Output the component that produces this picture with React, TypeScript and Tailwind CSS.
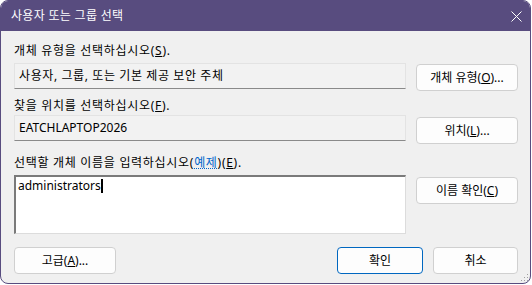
import React from 'react';

const font = { fontFamily: '"Noto Sans", "Noto Sans CJK KR", sans-serif' };

function Btn({ children, primary = false, className = '' }: { children: React.ReactNode; primary?: boolean; className?: string }) {
    return (
        <button
            type="button"
            className={`h-[27px] flex items-center justify-center rounded-[4px] bg-[#fdfdfd] text-[12px] text-black leading-none border ${primary ? 'border-[#0067c0]' : 'border-[#d0d0d0]'} ${className}`}
        >
            {children}
        </button>
    );
}

export default function App() {
    return (
        <div className="w-[532px] h-[285px] bg-white" style={font}>
            <div className="relative w-[531px] h-[284px] rounded-[8px] border border-[#584c7f] bg-[#f0f0f0] overflow-hidden flex flex-col">
                {/* title bar */}
                <div className="h-[30px] bg-[#584c7f] flex items-center justify-between pl-[10px] pr-[8px] text-white shrink-0">
                    <span className="text-[12px] leading-none tracking-[0.3px]">사용자 또는 그룹 선택</span>
                    <svg width="11" height="11" viewBox="0 0 11 11" className="mt-[1px]">
                        <path d="M0.5 0.5 L10.5 10.5 M10.5 0.5 L0.5 10.5" stroke="white" strokeWidth="1" />
                    </svg>
                </div>

                <div className="flex flex-col pl-[13px] pr-[12px] pt-[12px] text-[12px] text-black">
                    <div className="h-[16px] leading-[16px] tracking-[0.7px]">
                        개체 유형을 선택하십시오(<span className="underline">S</span>).
                    </div>
                    <div className="flex items-start gap-[10px]">
                        <div className="mt-[4px] w-[392px] h-[26px] bg-[#f2f2f2] border border-[#e3e3e3] border-b-[#8a8a8a] flex items-center pl-[4px] tracking-[0.6px]">
                            사용자, 그룹, 또는 기본 제공 보안 주체
                        </div>
                        <Btn className="mt-[5px] w-[102px]">
                            개체 유형(<span className="underline">O</span>)...
                        </Btn>
                    </div>

                    <div className="mt-[7px] h-[16px] leading-[16px] tracking-[0.7px]">
                        찾을 위치를 선택하십시오(<span className="underline">F</span>).
                    </div>
                    <div className="flex items-start gap-[10px]">
                        <div className="mt-[1px] w-[392px] h-[26px] bg-[#f2f2f2] border border-[#e3e3e3] border-b-[#8a8a8a] flex items-center pl-[4px]">
                            EATCHLAPTOP2026
                        </div>
                        <Btn className="mt-[3px] w-[102px]">
                            위치(<span className="underline">L</span>)...
                        </Btn>
                    </div>

                    <div className="mt-[11px] h-[16px] leading-[16px] tracking-[0.7px]">
                        선택할 개체 이름을 입력하십시오(<span className="text-[#0066cc] underline decoration-dotted">예제</span>)(<span className="underline">E</span>).
                    </div>
                    <div className="flex items-start gap-[10px]">
                        <div className="mt-[4px] w-[392px] h-[59px] bg-white border-t-2 border-l-2 border-[#7a7a7a] border-r border-b border-r-[#dcdcdc] border-b-[#dcdcdc] px-[2px] pt-[2px] leading-[14px]">
                            administrators
                            <span className="inline-block align-middle w-[2px] h-[14px] bg-black -mt-[2px]" />
                        </div>
                        <Btn className="mt-[6px] w-[102px]">
                            이름 확인(<span className="underline">C</span>)
                        </Btn>
                    </div>

                    <div className="mt-[13px] flex items-center">
                        <Btn className="w-[102px]">
                            고급(<span className="underline">A</span>)...
                        </Btn>
                        <div className="flex-1" />
                        <Btn primary className="w-[86px]">확인</Btn>
                        <Btn className="ml-[10px] w-[85px]">취소</Btn>
                    </div>
                </div>

                {/* resize grip */}
                <svg width="9" height="9" viewBox="0 0 9 9" className="absolute right-[1px] bottom-[1px]">
                    <rect x="7" y="1" width="1" height="1" fill="#a0a0a0" />
                    <rect x="4" y="4" width="1" height="1" fill="#a0a0a0" />
                    <rect x="7" y="4" width="1" height="1" fill="#a0a0a0" />
                    <rect x="1" y="7" width="1" height="1" fill="#a0a0a0" />
                    <rect x="4" y="7" width="1" height="1" fill="#a0a0a0" />
                    <rect x="7" y="7" width="1" height="1" fill="#a0a0a0" />
                </svg>
            </div>
        </div>
    );
}
